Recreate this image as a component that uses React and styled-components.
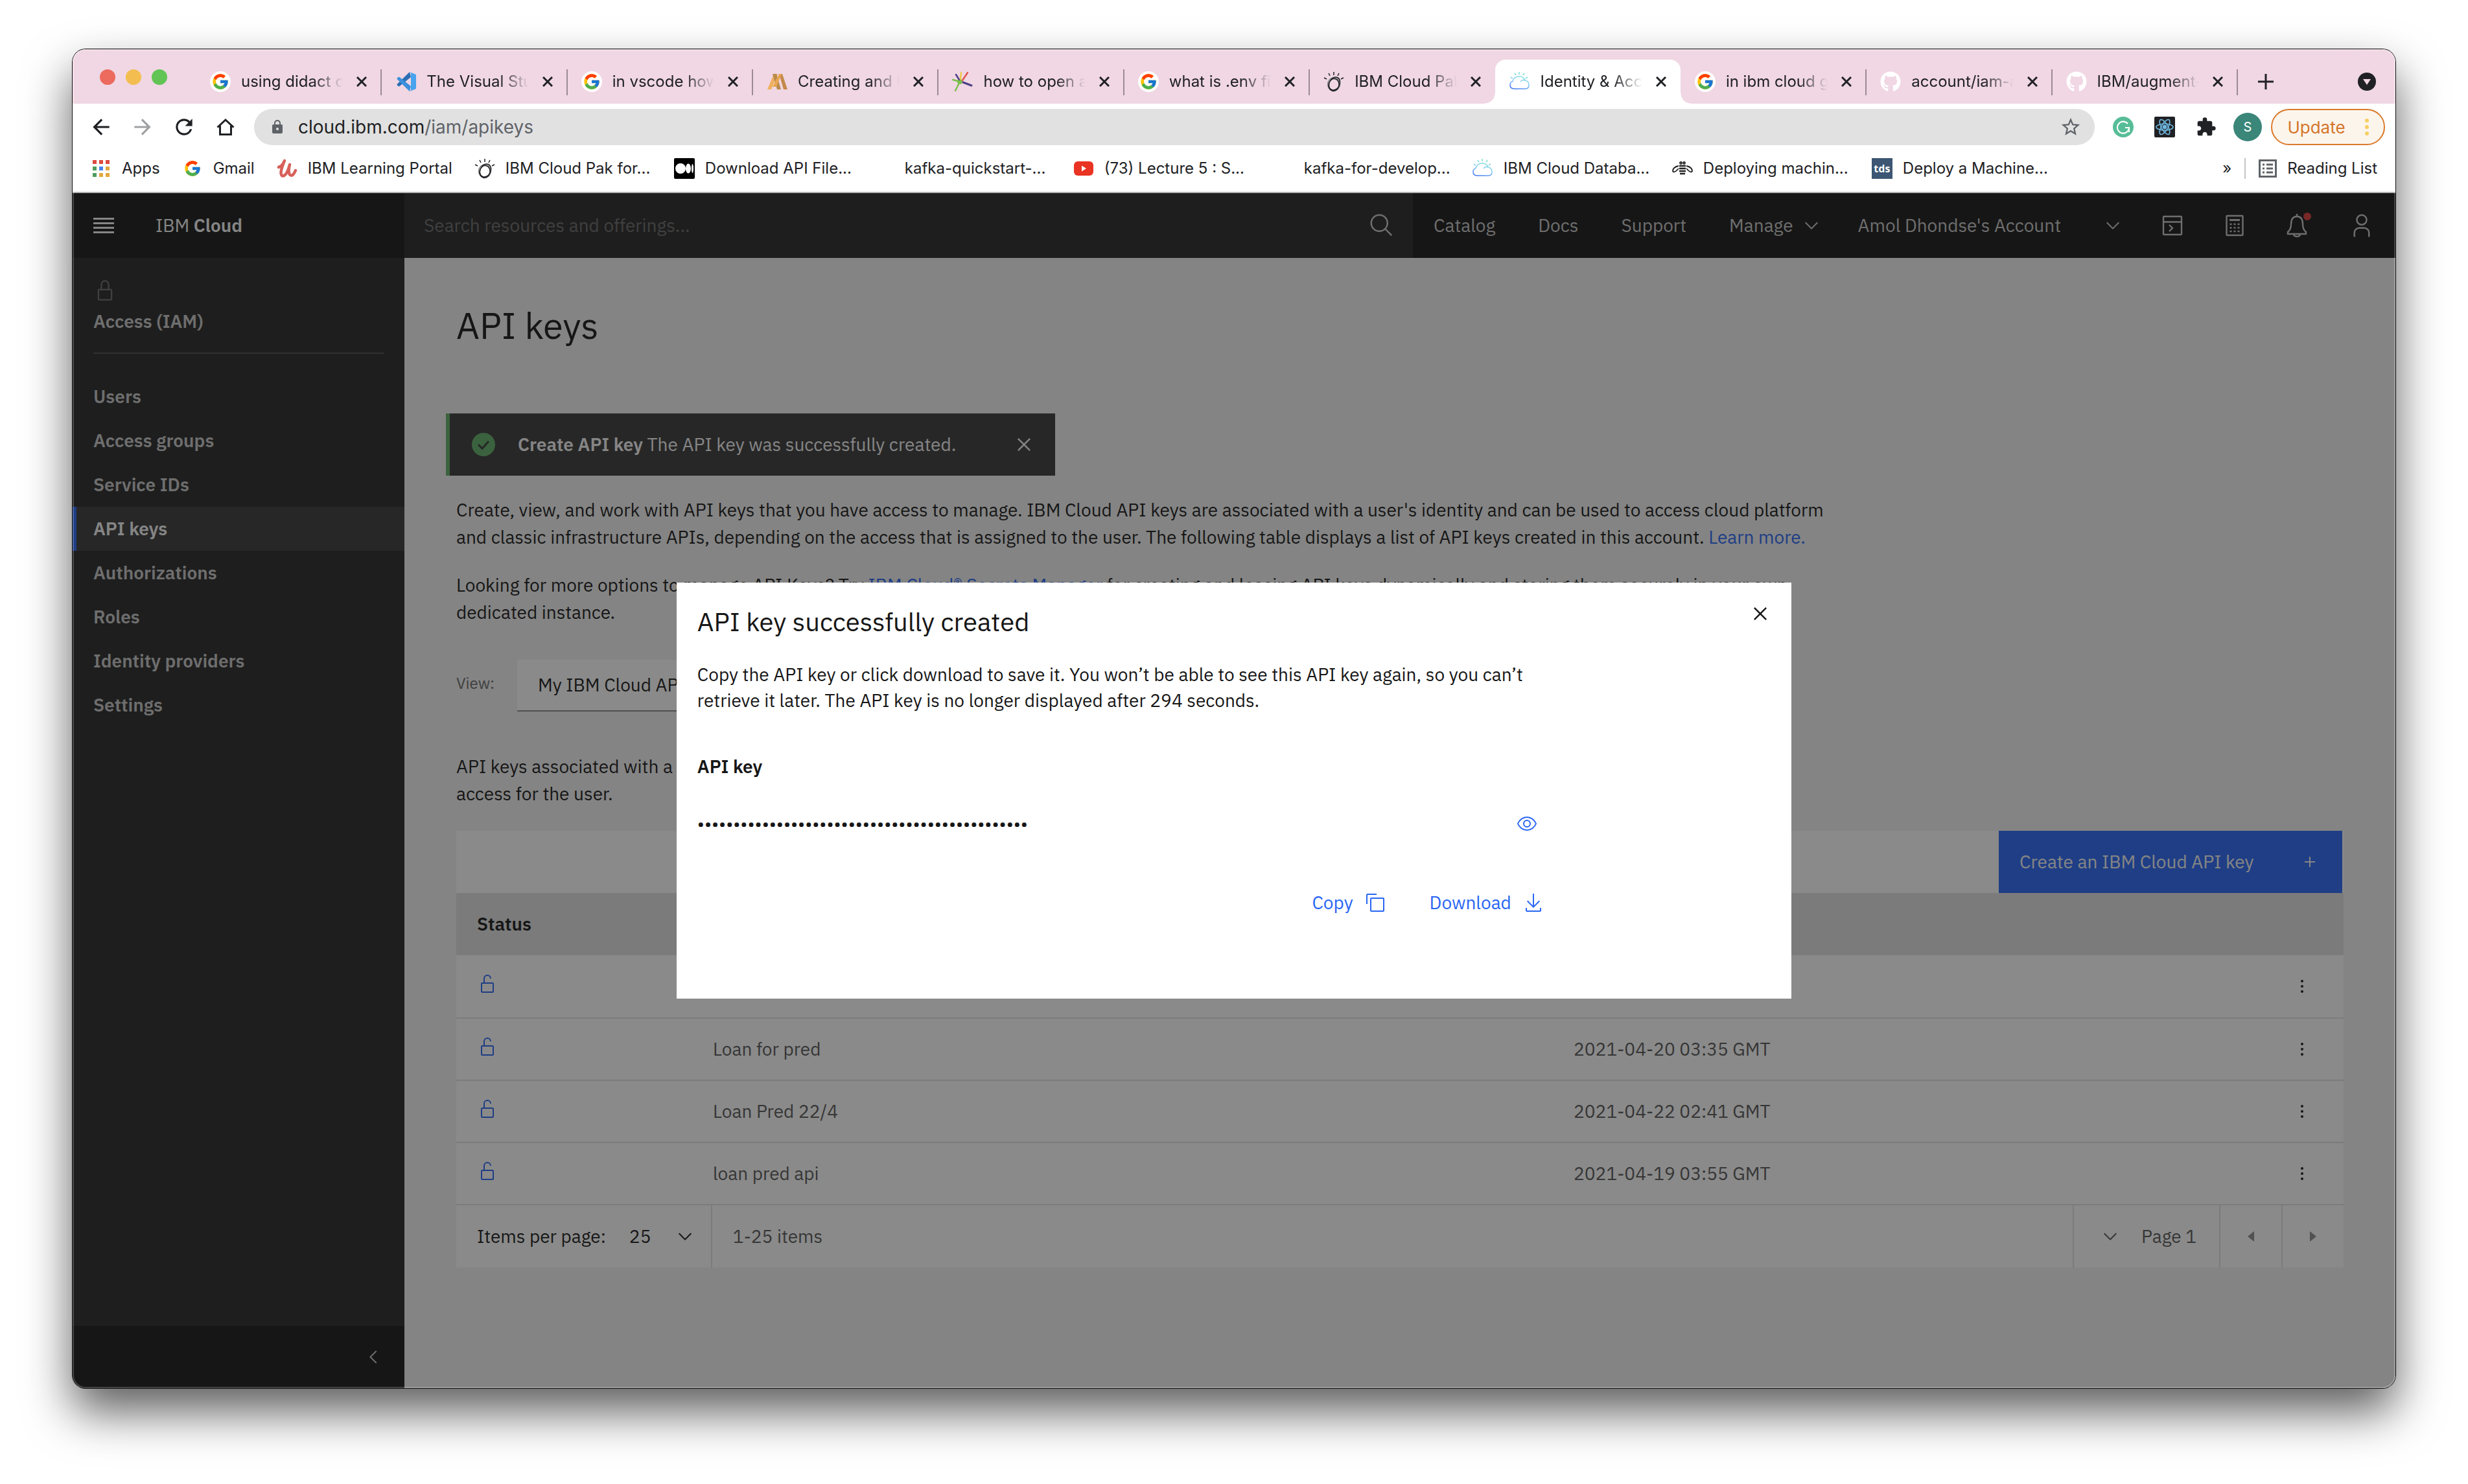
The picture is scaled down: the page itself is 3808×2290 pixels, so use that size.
import React from "react";
import styled, { createGlobalStyle, css } from "styled-components";
import { FcGoogle } from "react-icons/fc";
import { FaGithub } from "react-icons/fa";
import {
  MdArrowBack,
  MdArrowForward,
  MdRefresh,
  MdLock,
  MdStarBorder,
  MdExtension,
} from "react-icons/md";

const plex = `"IBM Plex Sans", Roboto, "Liberation Sans", sans-serif`;
const system = `Inter, "Liberation Sans", sans-serif`;

const GlobalStyle = createGlobalStyle`
  *, *::before, *::after { box-sizing: border-box; }
  body { margin: 0; background: #fff; }
  button, input, select { font: inherit; color: inherit; border: 0; padding: 0; margin: 0; background: none; border-radius: 0; appearance: none; outline: 0; }
  button { display: inline-flex; align-items: center; justify-content: center; cursor: pointer; }
  a { color: inherit; text-decoration: none; }
  h1, h2, p, ul { margin: 0; padding: 0; font-weight: 400; }
  ul { list-style: none; }
  svg { display: block; flex: none; }
`;

/* ---------- window ---------- */

const Desktop = styled.div`
  display: flex;
  min-height: 100vh;
  padding: 76px 112px 148px;
`;

const Window = styled.div`
  position: relative;
  flex: 1;
  min-width: 0;
  display: flex;
  flex-direction: column;
  border-radius: 20px;
  overflow: hidden;
  background: #fff;
  font-family: ${system};
  font-size: 24px;
  color: #202124;
  box-shadow: 0 0 0 1px #111, 0 36px 72px rgba(0, 0, 0, 0.64);

  &::after {
    content: "";
    position: absolute;
    inset: 0;
    border-radius: 20px;
    box-shadow: inset 0 0 0 2px rgba(255, 255, 255, 0.2);
    pointer-events: none;
  }
`;

/* ---------- tab strip ---------- */

const TabStrip = styled.div`
  display: flex;
  height: 84px;
  padding-top: 16px;
  background: #f0d7e3;
`;

const Lights = styled.div`
  display: flex;
  align-items: center;
  gap: 16px;
  width: 190px;
  padding: 0 0 14px 42px;
`;

const Light = styled.span`
  width: 24px;
  height: 24px;
  border-radius: 50%;
  background: ${(p) => p.$color};
`;

const Tabs = styled.ul`
  display: flex;
  flex: 1;
  min-width: 0;
`;

const Tab = styled.li`
  position: relative;
  flex: 1 1 0;
  min-width: 0;
  display: flex;
  align-items: center;
  gap: 16px;
  padding: 0 20px 0 22px;

  ${(p) =>
    p.$divider &&
    css`
      &::after {
        content: "";
        position: absolute;
        right: -1px;
        top: 15px;
        width: 2px;
        height: 40px;
        background: #9c8b93;
      }
    `}

  ${(p) =>
    p.$active &&
    css`
      background: #fff;
      border-radius: 16px 16px 0 0;
      &::before,
      &::after {
        content: "";
        position: absolute;
        bottom: 0;
        width: 16px;
        height: 16px;
      }
      &::before {
        left: -16px;
        background: radial-gradient(circle at 0 0, transparent 15px, #fff 16px);
      }
      &::after {
        right: -16px;
        background: radial-gradient(circle at 100% 0, transparent 15px, #fff 16px);
      }
    `}
`;

const TabTitle = styled.span`
  flex: 1;
  min-width: 0;
  overflow: hidden;
  white-space: nowrap;
  font-size: 24px;
  line-height: 32px;
  mask-image: linear-gradient(90deg, #000 70%, transparent 98%);
`;

const TabClose = styled.button`
  width: 20px;
  height: 32px;
`;

const TabTools = styled.div`
  display: flex;
  align-items: center;
  justify-content: space-between;
  width: 244px;
  padding: 0 30px 0 32px;
`;

const Disc = styled.span`
  display: flex;
  align-items: center;
  justify-content: center;
  width: 32px;
  height: 32px;
  border-radius: 50%;
  background: ${(p) => p.$color || "#fff"};
`;

/* ---------- toolbar ---------- */

const Toolbar = styled.div`
  display: flex;
  align-items: center;
  height: 72px;
  padding: 0 16px 0 28px;
`;

const ToolButton = styled.button`
  width: 32px;
  height: 32px;
  margin-right: 32px;
  color: ${(p) => (p.$muted ? "#a0a1a3" : "#202124")};
`;

const Omnibox = styled.div`
  display: flex;
  align-items: center;
  flex: 1;
  height: 56px;
  margin-left: -4px;
  padding: 0 20px 0 24px;
  gap: 20px;
  border-radius: 28px;
  background: #e1e1e1;
  color: #5f6368;
  font-size: 28px;
`;

const Address = styled.span`
  flex: 1;
  b {
    font-weight: 400;
    color: #202124;
  }
`;

const Extensions = styled.div`
  display: flex;
  align-items: center;
  gap: 32px;
  padding: 0 20px 0 28px;
`;

const Avatar = styled.button`
  width: 44px;
  height: 44px;
  margin: 0 -6px;
  border-radius: 50%;
  background: #3a8679;
  color: #fff;
  font-size: 20px;
`;

const UpdateButton = styled.button`
  width: 176px;
  height: 56px;
  gap: 30px;
  border: 2px solid #d97a2c;
  border-radius: 28px;
  background: #fcf5ec;
  color: #d4762b;
  font-size: 26px;
`;

/* ---------- bookmarks ---------- */

const Bookmarks = styled.nav`
  display: flex;
  align-items: center;
  height: 66px;
  padding: 0 28px 8px;
  border-bottom: 2px solid #b3b3b3;
  font-size: 24px;
  line-height: 32px;
`;

const Bookmark = styled.a`
  display: flex;
  align-items: center;
  gap: 16px;
  white-space: nowrap;
  ${(p) => (p.$fixed ? "flex: 0 0 308px;" : "margin-right: 34px;")}
`;

const IconSlot = styled.span`
  display: flex;
  align-items: center;
  justify-content: center;
  width: 32px;
  height: 32px;
`;

const TdsBadge = styled(IconSlot)`
  background: #3c5674;
  color: #fff;
  font: 700 16px "Open Sans", sans-serif;
`;

const BookmarksEnd = styled.div`
  display: flex;
  align-items: center;
  margin-left: auto;
  gap: 20px;
`;

const ReadingList = styled.a`
  display: flex;
  align-items: center;
  gap: 16px;
  padding-left: 20px;
  border-left: 2px solid #c4c4c4;
`;

/* ---------- cloud console shell ---------- */

const Page = styled.div`
  position: relative;
  flex: 1;
  display: flex;
  flex-direction: column;
  font-family: ${plex};
  font-size: 28px;
  line-height: 42px;
  color: #161616;
  background: #f2f2f2;
`;

const Header = styled.header`
  display: flex;
  align-items: center;
  height: 100px;
  background: #171717;
  color: #c6c6c6;
`;

const BrandArea = styled.div`
  display: flex;
  align-items: center;
  width: 512px;
  padding-left: 32px;
  gap: 64px;
  color: #f4f4f4;
  b {
    font-weight: 600;
  }
`;

const SearchField = styled.label`
  flex: 1;
  display: flex;
  align-items: center;
  align-self: stretch;
  padding: 0 28px 0 30px;
  background: #262626;
  input {
    flex: 1;
  }
  input::placeholder {
    color: #6a6a6a;
    opacity: 1;
  }
`;

const HeaderNav = styled.nav`
  display: flex;
  align-items: center;
  padding: 0 56px 0 32px;
  gap: 66px;
`;

const AccountMenu = styled.button`
  gap: ${(p) => p.$gap};
`;

const HeaderTools = styled.div`
  display: flex;
  align-items: center;
  gap: 56px;
  padding: 0 32px 0 56px;
`;

const Body = styled.div`
  flex: 1;
  display: flex;
`;

const Sidebar = styled.aside`
  display: flex;
  flex-direction: column;
  width: 512px;
  background: #262626;
  color: #c6c6c6;
  font-weight: 600;
`;

const SidebarHead = styled.div`
  margin: 32px 32px 32px;
  padding-bottom: 30px;
  border-bottom: 2px solid #4a4a4a;
  line-height: 36px;
  svg {
    margin-bottom: 12px;
    color: #6a6a6a;
  }
`;

const SideLink = styled.a`
  display: flex;
  align-items: center;
  height: 68px;
  padding-left: 26px;
  border-left: 6px solid ${(p) => (p.$active ? "#2866f4" : "transparent")};
  background: ${(p) => (p.$active ? "#393939" : "none")};
  color: ${(p) => (p.$active ? "#f4f4f4" : "inherit")};
`;

const SidebarFoot = styled.div`
  display: flex;
  align-items: center;
  justify-content: flex-end;
  height: 96px;
  margin-top: auto;
  padding-right: 32px;
  background: #171717;
`;

/* ---------- main content ---------- */

const Main = styled.main`
  flex: 1;
  min-width: 0;
  padding: 72px 80px;
`;

const PageTitle = styled.h1`
  font-size: 56px;
  line-height: 64px;
`;

const Toast = styled.div`
  display: flex;
  align-items: center;
  width: 940px;
  height: 96px;
  margin: 104px 0 32px -16px;
  padding: 0 32px 0 34px;
  border-left: 6px solid #5fae66;
  background: #393939;
  color: #f4f4f4;
  p {
    flex: 1;
    padding-left: 35px;
  }
  b {
    font-weight: 600;
  }
`;

const Text = styled.p`
  max-width: 75%;
  margin-bottom: ${(p) => p.$after};
`;

const Link = styled.a`
  color: #2866f4;
`;

const ViewRow = styled.label`
  display: flex;
  width: 1000px;
  margin-bottom: 64px;
  > span {
    width: 94px;
    padding-top: 15px;
    font-size: 24px;
    color: #6a6a6a;
  }
`;

const ViewSelect = styled.select`
  flex: 1;
  height: 80px;
  padding: 0 32px;
  background: #fff;
  border-bottom: 2px solid #8d8d8d;
`;

const TableBar = styled.div`
  display: flex;
  justify-content: flex-end;
  height: 96px;
  padding-right: 2px;
  background: #fff;
`;

const CreateButton = styled.button`
  justify-content: space-between;
  width: 530px;
  padding: 0 42px 0 32px;
  background: #2866f4;
  color: #f4f4f4;
`;

const Table = styled.table`
  width: 100%;
  table-layout: fixed;
  border-collapse: separate;
  border-spacing: 0;
  background: #fff;
  color: #565656;

  th,
  td {
    height: 96px;
    padding: 0 32px;
    text-align: left;
    font-weight: 400;
  }
  th {
    background: #e0e0e0;
    color: #161616;
    font-weight: 600;
  }
  tr + tr td {
    border-top: 2px solid #e0e0e0;
  }
`;

const Col = styled.col`
  width: ${(p) => p.$w};
`;

const RowMenu = styled.button`
  width: 64px;
  height: 64px;
  color: #161616;
`;

const StatusIcon = styled.span`
  display: flex;
  height: 40px;
  color: #2866f4;
`;

const Pagination = styled.div`
  display: flex;
  align-items: stretch;
  height: 98px;
  border-top: 2px solid #e0e0e0;
  background: #fff;
  color: #565656;
`;

const PageCell = styled.div`
  display: flex;
  align-items: center;
  padding: ${(p) => p.$pad || "0 32px"};
  border-left: ${(p) => (p.$edge ? "2px solid #e0e0e0" : "0")};
  margin-left: ${(p) => (p.$push ? "auto" : "0")};
  color: ${(p) => (p.$strong ? "#161616" : "inherit")};
  gap: ${(p) => p.$gap || "32px"};
`;

const PageStep = styled.button`
  width: 96px;
  border-left: 2px solid #e0e0e0;
  color: #8d8d8d;
`;

/* ---------- modal ---------- */

const Overlay = styled.div`
  position: absolute;
  inset: 0;
  display: flex;
  align-items: center;
  justify-content: center;
  background: rgba(22, 22, 22, 0.5);
`;

const Modal = styled.div`
  width: 48%;
  min-height: 642px;
  padding: 32px;
  background: #fff;
`;

const ModalHead = styled.div`
  display: flex;
  justify-content: space-between;
  h2 {
    font-size: 40px;
    line-height: 56px;
  }
`;

const CloseButton = styled.button`
  width: 32px;
  height: 32px;
`;

const ModalBody = styled.div`
  max-width: 1312px;
  line-height: 40px;
`;

const ModalText = styled.p`
  margin: 34px 0 62px;
`;

const KeyField = styled.div`
  display: flex;
  flex-wrap: wrap;
  align-items: center;
  row-gap: 48px;
  padding-right: 16px;
  label {
    flex: 0 0 100%;
    font-weight: 600;
  }
  input {
    flex: 1;
    height: 40px;
    font-size: 28px;
  }
`;

const ModalActions = styled.div`
  display: flex;
  justify-content: flex-end;
  gap: 68px;
  margin-top: 82px;
  padding-right: 6px;
  color: #2866f4;
`;

const ActionButton = styled.button`
  gap: 18px;
`;

const EyeButton = styled.button`
  color: #2866f4;
`;

/* ---------- icons ---------- */

const Carbon = ({ d, size = 32, box = 32 }) => (
  <svg width={size} height={size} viewBox={`0 0 ${box} ${box}`} fill="currentColor" aria-hidden="true">
    <path d={d} />
  </svg>
);

const paths = {
  chevron: "M8 11L3 6 3.7 5.3 8 9.6 12.3 5.3 13 6z",
  chevronLeft: "M5 8L10 3 10.7 3.7 6.4 8 10.7 12.3 10 13z",
  close:
    "M24 9.4L22.6 8 16 14.6 9.4 8 8 9.4 14.6 16 8 22.6 9.4 24 16 17.4 22.6 24 24 22.6 17.4 16z",
  search:
    "M29,27.586l-7.552-7.552a11.018,11.018,0,1,0-1.414,1.414L27.586,29ZM4,13a9,9,0,1,1,9,9A9.01,9.01,0,0,1,4,13Z",
  copy: "M28,10V28H10V10H28m0-2H10a2,2,0,0,0-2,2V28a2,2,0,0,0,2,2H28a2,2,0,0,0,2-2V10a2,2,0,0,0-2-2ZM4,18H2V4A2,2,0,0,1,4,2H18V4H4Z",
  download:
    "M26 24v4H6V24H4v4a2 2 0 0 0 2 2H26a2 2 0 0 0 2-2V24zM26 14L24.59 12.59 17 20.17 17 2 15 2 15 20.17 7.41 12.59 6 14 16 24z",
  eye: "M30.94,15.66A16.69,16.69,0,0,0,16,5,16.69,16.69,0,0,0,1.06,15.66a1,1,0,0,0,0,.68A16.69,16.69,0,0,0,16,27,16.69,16.69,0,0,0,30.94,16.34,1,1,0,0,0,30.94,15.66ZM16,25c-5.3,0-10.9-3.93-12.93-9C5.1,10.93,10.7,7,16,7s10.9,3.93,12.93,9C26.9,21.07,21.3,25,16,25ZM16,10a6,6,0,1,0,6,6A6,6,0,0,0,16,10Zm0,10a4,4,0,1,1,4-4A4,4,0,0,1,16,20Z",
  unlocked:
    "M24,14H12V8a4,4,0,0,1,8,0h2A6,6,0,0,0,10,8v6H8a2,2,0,0,0-2,2V28a2,2,0,0,0,2,2H24a2,2,0,0,0,2-2V16A2,2,0,0,0,24,14Zm0,14H8V16H24Z",
  locked:
    "M24,14H22V8A6,6,0,0,0,10,8v6H8a2,2,0,0,0-2,2V28a2,2,0,0,0,2,2H24a2,2,0,0,0,2-2V16A2,2,0,0,0,24,14ZM12,8a4,4,0,0,1,8,0v6H12ZM24,28H8V16H24Z",
  user: "M16,4a5,5,0,1,1-5,5,5,5,0,0,1,5-5m0-2a7,7,0,1,0,7,7A7,7,0,0,0,16,2ZM26,30H24V25a5,5,0,0,0-5-5H13a5,5,0,0,0-5,5v5H6V25a7,7,0,0,1,7-7h6a7,7,0,0,1,7,7Z",
};

const Cross = () => (
  <svg width="16" height="16" viewBox="0 0 16 16" stroke="#202124" strokeWidth="3" aria-hidden="true">
    <path d="M1 1L15 15M15 1L1 15" />
  </svg>
);

const Google = () => (
  <Disc>
    <FcGoogle size={28} />
  </Disc>
);

const VsCode = () => (
  <svg width="32" height="32" viewBox="0 0 32 32" aria-hidden="true">
    <path d="M22 1L3 19.500Q2 20.500 3 21.500L4.500 23Q5.500 23.500 6.500 23L24 9Z" fill="#2a6fb5" />
    <path d="M22 31L3 12.500Q2 11.500 3 10.500L4.500 9Q5.500 8.500 6.500 9L24 23Z" fill="#3c8fdc" />
    <path d="M22 1L32 5V27L22 31Q24 30 24 28V4Q24 2 22 1Z" fill="#4aa3ee" />
  </svg>
);

const Araa = () => (
  <svg width="32" height="32" viewBox="0 0 32 32" aria-hidden="true">
    <path d="M11 4H17L7 28H1Z" fill="#f0b060" />
    <path d="M9 4H15L22 28H16Z" fill="#b98a4c" />
    <path d="M19 4H24L32 28H26Z" fill="#c48a4a" />
    <path d="M19 4H23L15 24H9Z" fill="#e8a552" />
  </svg>
);

const Splash = () => (
  <svg width="32" height="32" viewBox="0 0 32 32" strokeLinecap="round" aria-hidden="true">
    <path d="M12 16L5 30M12 16L1 13" stroke="#7dc04c" strokeWidth="2.500" />
    <circle cx="12" cy="16" r="4" fill="#7dc04c" />
    <path d="M11 13L6 5" stroke="#4c3f86" strokeWidth="2.500" />
    <path d="M13 12L14 2" stroke="#efc94c" strokeWidth="2.500" />
    <path d="M16 14L24 2" stroke="#e2574c" strokeWidth="2.500" />
    <path d="M17 17L30 22" stroke="#4c3f86" strokeWidth="3" />
  </svg>
);

const Watson = () => (
  <svg width="32" height="32" viewBox="0 0 32 32" fill="none" stroke="#202124" strokeWidth="1.500" aria-hidden="true">
    <ellipse cx="16" cy="20" rx="9.500" ry="10" stroke="#8a8a8a" />
    <ellipse cx="17" cy="19" rx="8" ry="10.500" transform="rotate(28 17 19)" />
    <ellipse cx="16" cy="21" rx="8" ry="9.500" transform="rotate(14 16 21)" />
    <path d="M16 1V6M8 3L10 7M24 3L22 7M1 10L5 12M31 10L27 12" />
  </svg>
);

const CloudMark = ({ id }) => (
  <svg width="32" height="32" viewBox="0 0 32 32" fill="none" stroke={`url(#${id})`} strokeWidth="1.600" aria-hidden="true">
    <defs>
      <linearGradient id={id} gradientUnits="userSpaceOnUse" x1="20" y1="2" x2="12" y2="28">
        <stop offset="0" stopColor="#7fe6d0" />
        <stop offset="0.550" stopColor="#8fd0f5" />
        <stop offset="1" stopColor="#4a7cf0" />
      </linearGradient>
    </defs>
    <path d="M7 27Q1 27 1 21Q1 17 5 15.500Q7 8 15 8Q22 8 24 14Q30 15 30 21Q30 27 25 27Z" />
    <path d="M17 16Q20 12 24 14M15 1V5M8 3L10 6M23 3L21 6M2 9L5 11M28 9L25 11" />
  </svg>
);

const AppsGrid = () => (
  <svg width="26" height="26" viewBox="0 0 26 26" aria-hidden="true">
    {["#dc4b3e", "#dc4b3e", "#dc4b3e", "#4f9d5d", "#4a83ec", "#e3a63c", "#4f9d5d", "#e3a63c", "#e3a63c"].map((c, i) => (
      <rect key={i} x={(i % 3) * 10} y={Math.floor(i / 3) * 10} width="6" height="6" fill={c} />
    ))}
  </svg>
);

const Udemy = () => (
  <svg width="32" height="32" viewBox="0 0 32 32" fill="none" stroke="#d9605a" strokeWidth="4.500" strokeLinecap="round" strokeLinejoin="round" aria-hidden="true">
    <path d="M3 14Q9 12 12 4Q7 16 6.500 22Q6.500 28 10 27.500Q16 26 20 10Q17 22 20.500 26Q25 29 29 19" />
  </svg>
);

const Medium = () => (
  <svg width="32" height="32" viewBox="0 0 32 32" aria-hidden="true">
    <rect width="32" height="32" rx="2" />
    <circle cx="10" cy="16" r="8" fill="#fff" />
    <ellipse cx="22" cy="16" rx="4" ry="7.500" fill="#fff" />
    <ellipse cx="28.500" cy="16" rx="1.500" ry="7" fill="#fff" />
  </svg>
);

const YouTube = () => (
  <svg width="30" height="22" viewBox="0 0 30 22" aria-hidden="true">
    <rect width="30" height="22" rx="6" fill="#e93323" />
    <path d="M12 6.500L19 11L12 15.500Z" fill="#fff" />
  </svg>
);

const Bee = () => (
  <svg width="32" height="32" viewBox="0 0 32 32" fill="none" stroke="#222" strokeWidth="1.800" aria-hidden="true">
    <circle cx="13.500" cy="7.500" r="1.500" />
    <circle cx="18.500" cy="7.500" r="1.500" />
    <path d="M11 12H21M11 16H21M11 20H21M12 24H20" strokeWidth="2.500" />
    <path d="M10 12Q1 14 1 20Q3 24 10 16M22 12Q31 14 31 20Q29 24 22 16" />
  </svg>
);

const ReadingIcon = () => (
  <svg width="28" height="28" viewBox="0 0 28 28" fill="none" stroke="#5f6368" strokeWidth="3" aria-hidden="true">
    <rect x="1.500" y="1.500" width="25" height="25" />
    <path d="M6 8H9M12 8H22M6 14H9M12 14H22M6 20H9M12 20H22" />
  </svg>
);

const Home = () => (
  <svg width="28" height="28" viewBox="0 0 28 28" fill="none" stroke="currentColor" strokeWidth="3" aria-hidden="true">
    <path d="M1.500 14.500L14 3L26.500 14.500M5.500 12V25.500H22.500V12" />
  </svg>
);

const Grammarly = () => (
  <Disc $color="#57bd97">
    <svg width="24" height="24" viewBox="0 0 24 24" fill="none" stroke="#fff" strokeWidth="2.200" aria-hidden="true">
      <path d="M19 7A9 9 0 1 0 21 13H15M21 13V20" />
    </svg>
  </Disc>
);

const ReactMark = () => (
  <svg width="32" height="32" viewBox="0 0 32 32" fill="none" stroke="#6fb8e0" strokeWidth="1.600" aria-hidden="true">
    <rect width="32" height="32" rx="2" fill="#202124" stroke="none" />
    <circle cx="16" cy="16" r="2.500" fill="#6fb8e0" />
    {[0, 60, 120].map((a) => (
      <ellipse key={a} cx="16" cy="16" rx="13" ry="5" transform={`rotate(${a} 16 16)`} />
    ))}
  </svg>
);

const Dots = ({ r, gap, color }) => (
  <svg width={r * 2} height={gap * 2 + r * 2} fill={color} aria-hidden="true">
    {[0, 1, 2].map((i) => (
      <circle key={i} cx={r} cy={r + i * gap} r={r} />
    ))}
  </svg>
);

const MenuIcon = () => (
  <svg width="32" height="24" viewBox="0 0 32 24" fill="currentColor" aria-hidden="true">
    {[0, 7, 14, 21].map((y) => (
      <rect key={y} y={y} width="32" height="3" />
    ))}
  </svg>
);

const Terminal = () => (
  <svg width="40" height="40" viewBox="0 0 40 40" fill="none" stroke="currentColor" strokeWidth="2.400" aria-hidden="true">
    <rect x="6" y="6" width="28" height="28" rx="1" />
    <path d="M6 14.500H34M15 19L20 24L15 29" />
  </svg>
);

const Calculator = () => (
  <svg width="40" height="40" viewBox="0 0 40 40" fill="none" stroke="currentColor" strokeWidth="2.400" aria-hidden="true">
    <rect x="7.500" y="5" width="25" height="30" rx="1" />
    <path d="M12 11.500H28" strokeWidth="3" />
    {[18, 23.5, 29].map((y) => (
      <path key={y} d={`M12.500 ${y}H15.500M18.500 ${y}H21.500M24.500 ${y}H27.500`} />
    ))}
  </svg>
);

const Bell = () => (
  <svg width="44" height="44" viewBox="0 0 44 44" fill="none" stroke="currentColor" strokeWidth="2.400" aria-hidden="true">
    <path d="M20 4V8M6 35V32Q11 28 11 20Q11 8 20 8Q29 8 29 20Q29 28 34 32V35ZM15 35Q15 39 20 39Q25 39 25 35" />
    <circle cx="36" cy="8" r="6" fill="#da3b36" stroke="none" />
  </svg>
);

const Success = () => (
  <svg width="36" height="36" viewBox="0 0 36 36" aria-hidden="true">
    <circle cx="18" cy="18" r="18" fill="#5fae66" />
    <path d="M10 18L16 24L26 13" fill="none" stroke="#393939" strokeWidth="3" />
  </svg>
);

const Plus = ({ size, width }) => (
  <svg width={size} height={size} viewBox="0 0 24 24" stroke="currentColor" strokeWidth={width} aria-hidden="true">
    <path d="M12 0V24M0 12H24" />
  </svg>
);

const Caret = ({ flip }) => (
  <svg width="10" height="16" viewBox="0 0 10 16" fill="currentColor" aria-hidden="true">
    <path d={flip ? "M0 0L10 8L0 16Z" : "M10 0L0 8L10 16Z"} />
  </svg>
);

/* ---------- data ---------- */

const tabs = [
  { title: "using didact on", icon: <Google />, divider: true },
  { title: "The Visual Studio", icon: <VsCode />, divider: true },
  { title: "in vscode how to", icon: <Google />, divider: true },
  { title: "Creating and Up", icon: <Araa />, divider: true },
  { title: "how to open a te", icon: <Splash />, divider: true },
  { title: "what is .env file", icon: <Google />, divider: true },
  { title: "IBM Cloud Pak", icon: <Watson /> },
  { title: "Identity & Acces", icon: <CloudMark id="tabCloud" />, active: true },
  { title: "in ibm cloud ge", icon: <Google />, divider: true },
  { title: "account/iam-ap", icon: <FaGithub size={32} color="#fff" />, divider: true },
  { title: "IBM/augment-", icon: <FaGithub size={32} color="#fff" />, divider: true },
];

const bookmarks = [
  { label: "Apps", icon: <AppsGrid /> },
  { label: "Gmail", icon: <FcGoogle size={28} /> },
  { label: "IBM Learning Portal", icon: <Udemy /> },
  { label: "IBM Cloud Pak for...", icon: <Watson />, fixed: true },
  { label: "Download API File...", icon: <Medium />, fixed: true },
  { label: "kafka-quickstart-...", icon: null, fixed: true },
  { label: "(73) Lecture 5 : S...", icon: <YouTube />, fixed: true },
  { label: "kafka-for-develop...", icon: null, fixed: true },
  { label: "IBM Cloud Databa...", icon: <CloudMark id="markCloud" />, fixed: true },
  { label: "Deploying machin...", icon: <Bee />, fixed: true },
  { label: "Deploy a Machine...", badge: "tds" },
];

const sideLinks = [
  "Users",
  "Access groups",
  "Service IDs",
  "API keys",
  "Authorizations",
  "Roles",
  "Identity providers",
  "Settings",
];

const keys = [
  { name: "", created: "" },
  { name: "Loan for pred", created: "2021-04-20 03:35 GMT" },
  { name: "Loan Pred 22/4", created: "2021-04-22 02:41 GMT" },
  { name: "loan pred api", created: "2021-04-19 03:55 GMT" },
];

/* ---------- sections ---------- */

const BrowserChrome = () => (
  <>
    <TabStrip>
      <Lights>
        <Light $color="#ec6a5e" />
        <Light $color="#f4bd4f" />
        <Light $color="#61c454" />
      </Lights>
      <Tabs>
        {tabs.map((t) => (
          <Tab key={t.title} $active={t.active} $divider={t.divider}>
            {t.icon}
            <TabTitle>{t.title}</TabTitle>
            <TabClose aria-label="Close tab">
              <Cross />
            </TabClose>
          </Tab>
        ))}
      </Tabs>
      <TabTools>
        <button aria-label="New tab">
          <Plus size={24} width={3} />
        </button>
        <button aria-label="Search tabs">
          <svg width="28" height="28" viewBox="0 0 28 28" aria-hidden="true">
            <circle cx="14" cy="14" r="14" fill="#202124" />
            <path d="M8 10H20L14 19Z" fill="#f0d7e3" />
          </svg>
        </button>
      </TabTools>
    </TabStrip>
    <Toolbar>
      <ToolButton aria-label="Back">
        <MdArrowBack size={38} />
      </ToolButton>
      <ToolButton aria-label="Forward" $muted>
        <MdArrowForward size={38} />
      </ToolButton>
      <ToolButton aria-label="Reload">
        <MdRefresh size={38} />
      </ToolButton>
      <ToolButton aria-label="Home">
        <Home />
      </ToolButton>
      <Omnibox>
        <MdLock size={24} />
        <Address>
          <b>cloud.ibm.com</b>/iam/apikeys
        </Address>
        <MdStarBorder size={34} />
      </Omnibox>
      <Extensions>
        <Grammarly />
        <ReactMark />
        <MdExtension size={32} />
        <Avatar>S</Avatar>
      </Extensions>
      <UpdateButton>
        Update
        <Dots r={3} gap={10} color="#f6cf62" />
      </UpdateButton>
    </Toolbar>
    <Bookmarks aria-label="Bookmarks">
      {bookmarks.map((b) => (
        <Bookmark key={b.label} href="#" $fixed={b.fixed}>
          {b.badge ? <TdsBadge>{b.badge}</TdsBadge> : <IconSlot>{b.icon}</IconSlot>}
          {b.label}
        </Bookmark>
      ))}
      <BookmarksEnd>
        <span>»</span>
        <ReadingList href="#">
          <ReadingIcon />
          Reading List
        </ReadingList>
      </BookmarksEnd>
    </Bookmarks>
  </>
);

const ConsoleHeader = () => (
  <Header>
    <BrandArea>
      <button aria-label="Menu">
        <MenuIcon />
      </button>
      <span>
        IBM <b>Cloud</b>
      </span>
    </BrandArea>
    <SearchField>
      <input aria-label="Search" placeholder="Search resources and offerings..." />
      <Carbon d={paths.search} size={40} />
    </SearchField>
    <HeaderNav>
      <a href="#">Catalog</a>
      <a href="#">Docs</a>
      <a href="#">Support</a>
      <AccountMenu $gap="12px">
        Manage <Carbon d={paths.chevron} box={16} />
      </AccountMenu>
    </HeaderNav>
    <AccountMenu $gap="64px">
      Amol Dhondse's Account <Carbon d={paths.chevron} box={16} />
    </AccountMenu>
    <HeaderTools>
      <button aria-label="Shell">
        <Terminal />
      </button>
      <button aria-label="Cost estimator">
        <Calculator />
      </button>
      <button aria-label="Notifications">
        <Bell />
      </button>
      <button aria-label="Profile">
        <Carbon d={paths.user} size={40} />
      </button>
    </HeaderTools>
  </Header>
);

const KeysTable = () => (
  <section>
    <TableBar>
      <CreateButton>
        Create an IBM Cloud API key
        <Plus size={16} width={3} />
      </CreateButton>
    </TableBar>
    <Table>
      <colgroup>
        <Col $w="12.5%" />
        <col />
        <Col $w="37.5%" />
        <Col $w="128px" />
      </colgroup>
      <thead>
        <tr>
          <th>Status</th>
          <th>Name</th>
          <th>Date created</th>
          <th aria-label="Actions" />
        </tr>
      </thead>
      <tbody>
        {keys.map((k, i) => (
          <tr key={i}>
            <td>
              <StatusIcon>
                <Carbon d={paths.unlocked} />
              </StatusIcon>
            </td>
            <td>{k.name}</td>
            <td>{k.created}</td>
            <td>
              <RowMenu aria-label="Row actions">
                <Dots r={2} gap={8} color="#161616" />
              </RowMenu>
            </td>
          </tr>
        ))}
      </tbody>
    </Table>
    <Pagination>
      <PageCell as="label" $strong $gap="36px" $pad="0 24px 0 32px">
        Items per page:
        <select defaultValue="25">
          <option>25</option>
        </select>
        <Carbon d={paths.chevron} box={16} size={32} />
      </PageCell>
      <PageCell $edge>1-25 items</PageCell>
      <PageCell as="label" $edge $push $pad="0 34px 0 40px" aria-label="Page number">
        <Carbon d={paths.chevron} box={16} size={32} />
        <select defaultValue="Page 1">
          <option>Page 1</option>
        </select>
      </PageCell>
      <PageStep aria-label="Previous page">
        <Caret />
      </PageStep>
      <PageStep aria-label="Next page">
        <Caret flip />
      </PageStep>
    </Pagination>
  </section>
);

const KeyModal = () => (
  <Overlay>
    <Modal role="dialog" aria-modal="true" aria-labelledby="modal-title">
      <ModalHead>
        <h2 id="modal-title">API key successfully created</h2>
        <CloseButton aria-label="Close">
          <Carbon d={paths.close} size={40} />
        </CloseButton>
      </ModalHead>
      <ModalBody>
        <ModalText>
          Copy the API key or click download to save it. You won’t be able to see this API key again, so you can’t
          <br />
          retrieve it later. The API key is no longer displayed after 294 seconds.
        </ModalText>
        <KeyField>
          <label htmlFor="api-key">API key</label>
          <input id="api-key" type="password" readOnly value={"x".repeat(46)} />
          <EyeButton aria-label="Show key">
            <Carbon d={paths.eye} />
          </EyeButton>
        </KeyField>
        <ModalActions>
          <ActionButton>
            Copy <Carbon d={paths.copy} />
          </ActionButton>
          <ActionButton>
            Download <Carbon d={paths.download} />
          </ActionButton>
        </ModalActions>
      </ModalBody>
    </Modal>
  </Overlay>
);

export default function App() {
  return (
    <>
      <GlobalStyle />
      <Desktop>
        <Window>
          <BrowserChrome />
          <Page>
            <ConsoleHeader />
            <Body>
              <Sidebar>
                <SidebarHead>
                  <Carbon d={paths.locked} size={36} />
                  Access (IAM)
                </SidebarHead>
                <nav>
                  {sideLinks.map((s) => (
                    <SideLink key={s} href="#" $active={s === "API keys"}>
                      {s}
                    </SideLink>
                  ))}
                </nav>
                <SidebarFoot>
                  <button aria-label="Collapse navigation">
                    <Carbon d={paths.chevronLeft} box={16} size={32} />
                  </button>
                </SidebarFoot>
              </Sidebar>
              <Main>
                <PageTitle>API keys</PageTitle>
                <Toast role="status">
                  <Success />
                  <p>
                    <b>Create API key</b> The API key was successfully created.
                  </p>
                  <CloseButton aria-label="Dismiss">
                    <Carbon d={paths.close} size={40} />
                  </CloseButton>
                </Toast>
                <Text $after="32px">
                  Create, view, and work with API keys that you have access to manage. IBM Cloud API keys are
                  associated with a user's identity and can be used to access cloud platform
                  <br />
                  and classic infrastructure APIs, depending on the access that is assigned to the user. The following
                  table displays a list of API keys created in this account. <Link href="#">Learn more.</Link>
                </Text>
                <Text $after="52px">
                  Looking for more options to manage API Keys? Try <Link href="#">IBM Cloud® Secrets Manager</Link> for
                  creating and leasing API keys dynamically and storing them securely in your own
                  <br />
                  dedicated instance.
                </Text>
                <ViewRow>
                  <span>View:</span>
                  <ViewSelect defaultValue="mine">
                    <option value="mine">My IBM Cloud API keys</option>
                  </ViewSelect>
                </ViewRow>
                <Text $after="36px">
                  API keys associated with a user's identity have the same access that the user is assigned across all
                  accounts. To update the access for an API key, assign or remove
                  <br />
                  access for the user.
                </Text>
                <KeysTable />
              </Main>
            </Body>
            <KeyModal />
          </Page>
        </Window>
      </Desktop>
    </>
  );
}
